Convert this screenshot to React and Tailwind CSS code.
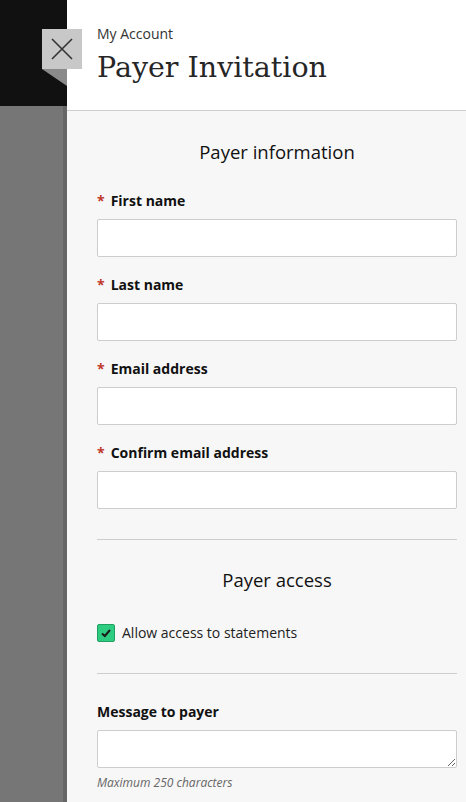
import React from "react";

const Field = ({ label, required = true }) => (
  <div className="flex flex-col">
    <label className="h-[18px] flex items-center text-[14px] font-bold text-[#111]">
      {required && <span className="text-[#c0392b] mr-[6px]">*</span>}
      {label}
    </label>
    <input className="mt-[10px] h-[38px] w-full bg-white border border-[#cdcdcd] rounded-[2px] outline-none" />
  </div>
);

export default function App() {
  return (
    <div className="relative flex h-[802px] w-[466px] overflow-hidden font-['Open_Sans',sans-serif]">
      <div className="flex w-[67px] shrink-0 flex-col">
        <div className="h-[106px] bg-[#111111]" />
        <div className="flex-1 bg-[#767676] border-r-[4px] border-[#666]" />
      </div>

      <div className="absolute left-[42px] top-[29px] z-10">
        <button className="flex h-[40px] w-[40px] items-center justify-center bg-[#c8c8c8]">
          <svg width="22" height="22" viewBox="0 0 22 22" fill="none" stroke="#333" strokeWidth="1.6">
            <path d="M1 1L21 21M21 1L1 21" />
          </svg>
        </button>
        <svg width="25" height="17" viewBox="0 0 25 17" className="block">
          <polygon points="0,0 25,0 25,17" fill="#8a8a8a" />
        </svg>
      </div>

      <div className="flex flex-1 flex-col">
        <header className="h-[111px] shrink-0 border-b border-[#cdcdcd] bg-white pl-[30px] pt-[25px]">
          <div className="text-[14px] leading-[18px] text-[#333]">My Account</div>
          <h1 className="mt-[7px] font-['DejaVu_Serif',serif] text-[28.5px] leading-[36px] text-[#262626]">
            Payer Invitation
          </h1>
        </header>

        <main className="flex-1 bg-[#f7f7f7] pl-[30px] pr-[9px]">
          <h2 className="mt-[29px] text-center text-[18.5px] font-medium leading-[24px] text-[#111]">Payer information</h2>
          <div className="mt-[27px] flex flex-col gap-[18px]">
            <Field label="First name" />
            <Field label="Last name" />
            <Field label="Email address" />
            <Field label="Confirm email address" />
          </div>

          <hr className="mt-[30px] border-t border-[#cdcdcd]" />

          <h2 className="mt-[28px] text-center text-[18.5px] font-medium leading-[24px] text-[#111]">Payer access</h2>
          <label className="mt-[30px] flex items-center gap-[7px] text-[14px] text-[#222]">
            <span className="flex h-[18px] w-[18px] items-center justify-center rounded-[2px] border border-[#20a060] bg-[#2ecc80]">
              <svg width="12" height="12" viewBox="0 0 12 12" fill="none" stroke="#1a1a1a" strokeWidth="2">
                <path d="M2 6.5L4.8 9L10 3" />
              </svg>
            </span>
            Allow access to statements
          </label>

          <hr className="mt-[30px] border-t border-[#cdcdcd]" />

          <div className="mt-[29px] text-[14px] font-bold leading-[18px] text-[#111]">Message to payer</div>
          <textarea className="mt-[9px] block h-[38px] w-full rounded-[2px] border border-[#cdcdcd] bg-white outline-none" />
          <div className="mt-[7px] text-[12px] italic leading-[16px] text-[#666]">Maximum 250 characters</div>
        </main>
      </div>
    </div>
  );
}
